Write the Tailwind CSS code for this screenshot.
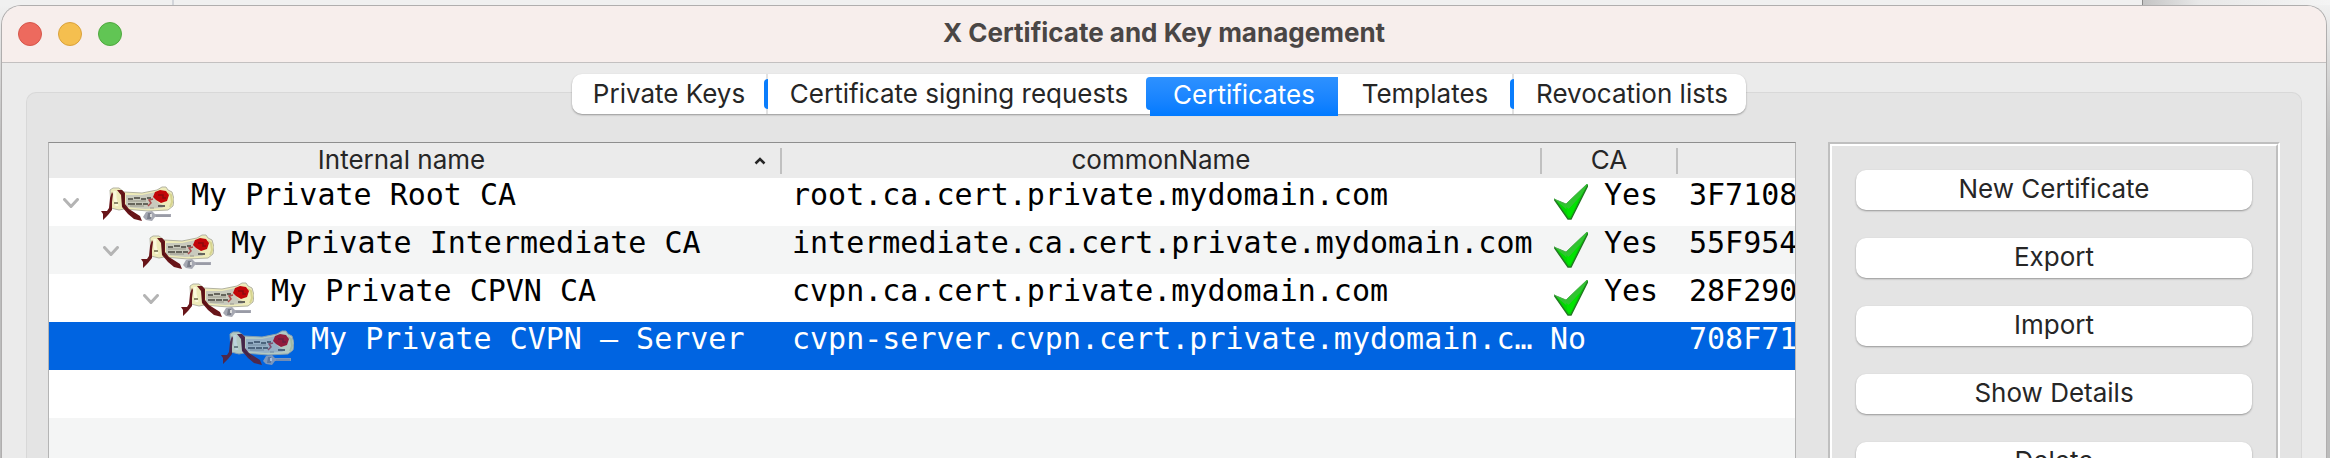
<!DOCTYPE html>
<html lang="en">
<head>
<meta charset="utf-8">
<title>X Certificate and Key management</title>
<script src="https://cdn.jsdelivr.net/npm/@tailwindcss/browser@4"></script>
</head>
<body class="h-screen overflow-hidden bg-[#f0f0f0] font-['Inter',sans-serif] text-[26px] leading-8 text-[#262626]">
<svg class="hidden" aria-hidden="true">
  <symbol id="cert" viewBox="0 0 74 36">
    <path d="M10 4L13 2H19L24 6L42 7L57 4L62 1L66 1L68 4L72 6L74 13L73 20L68 24L48 25L24 23L19 24L11 22Z" fill="#eeebba" stroke="#b3b3a2" stroke-width="1"/>
    <path d="M26 9L42 9L56 6L55 13L60 18L65 20L62 22L45 23L26 21Z" fill="#c9cabd"/>
    <path d="M68 7L71 9L72 16L70 21" fill="none" stroke="#d6d48f" stroke-width="2"/>
    <path d="M15 5V12L17 20" fill="none" stroke="#fbf9dc" stroke-width="3"/>
    <path d="M14 17H18" stroke="#8d8a6a" stroke-width="2"/>
    <path d="M28 13h5m1-1h6m1 1h5m1-1h4M28 18h7m1 0h6m1 0h5M58 20h7" fill="none" stroke="#66655c" stroke-width="2"/>
    <path d="M28 15h18M30 20h14M50 22h4" fill="none" stroke="#98978a" stroke-width="1"/>
    <path d="M48 20L51 17L49 14L53 13" fill="none" stroke="#ad4b4b" stroke-width="1.500"/>
    <path d="M12 6L10 12L9 22L7 25L1 25L3 28L3 34L8 29L12 24L12 16L13 8Z" fill="#681519"/>
    <path d="M17 4L22 4L25 7L25 18L29 23L40 30L42 35L34 33L28 28L22 21L21 9Z" fill="#681519"/>
    <path d="M23 8L23 20L31 27" fill="none" stroke="#4b1014" stroke-width="1"/>
    <path d="M55 6L60 4L66 5L69 9L67 15L61 17L56 14L53 11Z" fill="#c20508"/>
    <path d="M58 9H63V12H66" fill="none" stroke="#8e080c" stroke-width="1.500"/>
    <path d="M46 26L52 25L55 28H71V31H55L52 35L46 34L43 31Z" fill="#a6a8b2"/>
    <path d="M48 27H51V33H47Z" fill="#7b7e8a"/><path d="M50 28H52V31H50Z" fill="#dddddd"/>
    <path d="M56 30H70" stroke="#8c8e99" stroke-width="1"/>
  </symbol>
  <symbol id="check" viewBox="0 0 34 36">
    <path d="M0 15L12 20L33 0L34 1L17 35L14 35Z" fill="#00d600"/>
    <path d="M0 15L12 20L33 0L34 1L26 13L15 25L12 25Z" fill="#2fc52f"/>
    <path d="M12 23L15 25L25 14L17 32L14 32Z" fill="#00e400"/>
    <path d="M0 15L14 35H17L34 1" fill="none" stroke="#237a23" stroke-width="1.500"/>
    <path d="M0 15L12 20L33 0" fill="none" stroke="#4fae4f" stroke-width="1"/>
  </symbol>
  <symbol id="chev" viewBox="0 0 16 10">
    <path d="M1.500 1.500L8 8.500L14.500 1.500" fill="none" stroke="#b4b4b4" stroke-width="3" stroke-linecap="round"/>
  </symbol>
</svg>

<div class="flex h-full flex-col">
  <div class="flex h-[5px] shrink-0">
    <div class="w-[174px] border-r-2 border-[#d2d5da]"></div>
    <div class="flex-1"></div>
    <div class="w-[188px] border-l border-[#8a8a8a] bg-linear-to-r from-[#c4c4c4] via-[#e8e8e8] via-30% to-[#f4f4f4]"></div>
  </div>
  <div class="flex min-h-0 flex-1 bg-linear-to-b from-[#f0f0f0] to-[#bcbcbc] to-30% pr-[3px] pl-px">
    <main class="flex min-w-0 flex-1 flex-col overflow-hidden rounded-t-[20px] border border-b-0 border-[#b0aeae] bg-[#ebebeb]">
      <header class="grid h-[57px] shrink-0 grid-cols-[1fr_auto_1fr] items-center border-b border-[#c3c0c0] bg-[#f7eeec]">
        <div class="flex gap-4 pl-4">
          <button aria-label="Close" class="size-6 rounded-full border border-[#d5564b] bg-[#ed6a5e]"></button>
          <button aria-label="Minimize" class="size-6 rounded-full border border-[#d9a13c] bg-[#f5bf4f]"></button>
          <button aria-label="Zoom" class="size-6 rounded-full border border-[#50a73f] bg-[#61c554]"></button>
        </div>
        <h1 class="pb-[2px] font-bold text-[#4a4645]">X Certificate and Key management</h1>
      </header>

      <div role="tablist" class="z-10 mt-[11px] mr-[10px] flex h-10 shrink-0 self-center rounded-[10px] bg-white shadow-[0_1px_2px_rgba(0,0,0,0.35)]">
        <button role="tab" class="w-[194px]">Private Keys</button>
        <button role="tab" class="relative w-[384px] border-l-2 border-[#e2e2e2]"><span class="absolute top-[5px] -left-1 h-[30px] w-1 rounded-l-sm bg-[#0a7dfc]"></span>Certificate signing requests</button>
        <button role="tab" aria-selected="true" class="relative mt-[3px] h-[39px] w-[188px] bg-linear-to-b from-[#2d91ff] to-[#007aff] pb-1 text-white"><span class="absolute top-0 -left-1 h-[33px] w-1 rounded-l-md bg-linear-to-b from-[#2d91ff] to-[#0a80ff]"></span>Certificates</button>
        <button role="tab" class="w-[174px]">Templates</button>
        <button role="tab" class="relative w-[234px] border-l-2 border-[#e2e2e2] pl-1"><span class="absolute top-[5px] -left-1 h-[30px] w-1 rounded-l-sm bg-[#0a7dfc]"></span>Revocation lists</button>
      </div>

      <section class="mx-6 -mt-[22px] flex min-h-0 flex-1 gap-8 rounded-t-[10px] border border-b-0 border-[#d8d8d8] bg-[#e4e4e4] px-[21px] pt-[49px]">
        <div class="min-w-0 flex-1 overflow-hidden border border-b-0 border-[#b4b4b4] border-t-[#8e8e8e] bg-white">
          <table class="w-full table-fixed border-collapse text-left whitespace-nowrap">
            <colgroup><col class="w-[733px]"><col class="w-[760px]"><col class="w-[136px]"><col></colgroup>
            <thead class="bg-[#ebebeb]">
              <tr class="h-[35px]">
                <th class="p-0 font-normal"><div class="flex h-[26px] items-center border-r-2 border-[#c0c0c0] pr-[14px]"><span class="flex-1 pb-[2px] text-center">Internal name</span>
                  <svg class="h-2 w-3" viewBox="0 0 12 8"><path d="M1.500 6.500L6 2L10.500 6.500" fill="none" stroke="#262626" stroke-width="2.500"/></svg></div></th>
                <th class="p-0 font-normal"><div class="flex h-[26px] items-center justify-center border-r-2 border-[#c0c0c0] pb-[2px]">commonName</div></th>
                <th class="p-0 font-normal"><div class="flex h-[26px] items-center justify-center border-r-2 border-[#c0c0c0] pb-[2px]">CA</div></th>
                <th class="p-0" aria-label="Serial"></th>
              </tr>
            </thead>
            <tbody class="font-['DejaVu_Sans_Mono',monospace] text-[30px] text-black">
              <tr class="h-12">
                <td class="p-0 pl-[14px]"><div class="flex h-12 items-start"><svg class="mt-5 h-[10px] w-4"><use href="#chev"/></svg><svg class="mt-2 ml-[21px] h-9 w-[74px]"><use href="#cert"/></svg><span class="ml-[17px] pt-px">My Private Root CA</span></div></td>
                <td class="p-0 pt-px pl-[10px] align-top">root.ca.cert.private.mydomain.com</td>
                <td class="p-0 pl-3"><div class="flex h-12 items-start"><svg class="mt-[6px] h-9 w-[34px]"><use href="#check"/></svg><span class="ml-4 pt-px">Yes</span></div></td>
                <td class="overflow-hidden p-0 pt-px pl-[11px] align-top">3F7108</td>
              </tr>
              <tr class="h-12 bg-[#f4f5f5]">
                <td class="p-0 pl-[54px]"><div class="flex h-12 items-start"><svg class="mt-5 h-[10px] w-4"><use href="#chev"/></svg><svg class="mt-2 ml-[21px] h-9 w-[74px]"><use href="#cert"/></svg><span class="ml-[17px] pt-px">My Private Intermediate CA</span></div></td>
                <td class="p-0 pt-px pl-[10px] align-top">intermediate.ca.cert.private.mydomain.com</td>
                <td class="p-0 pl-3"><div class="flex h-12 items-start"><svg class="mt-[6px] h-9 w-[34px]"><use href="#check"/></svg><span class="ml-4 pt-px">Yes</span></div></td>
                <td class="overflow-hidden p-0 pt-px pl-[11px] align-top">55F954</td>
              </tr>
              <tr class="h-12">
                <td class="p-0 pl-[94px]"><div class="flex h-12 items-start"><svg class="mt-5 h-[10px] w-4"><use href="#chev"/></svg><svg class="mt-2 ml-[21px] h-9 w-[74px]"><use href="#cert"/></svg><span class="ml-[17px] pt-px">My Private CPVN CA</span></div></td>
                <td class="p-0 pt-px pl-[10px] align-top">cvpn.ca.cert.private.mydomain.com</td>
                <td class="p-0 pl-3"><div class="flex h-12 items-start"><svg class="mt-[6px] h-9 w-[34px]"><use href="#check"/></svg><span class="ml-4 pt-px">Yes</span></div></td>
                <td class="overflow-hidden p-0 pt-px pl-[11px] align-top">28F290</td>
              </tr>
              <tr class="h-12 bg-[#0064e1] text-white">
                <td class="p-0 pl-[171px]"><div class="flex h-12 items-start"><svg class="mt-2 h-9 w-[74px] opacity-75"><use href="#cert"/></svg><span class="ml-[17px] pt-px">My Private CVPN – Server</span></div></td>
                <td class="p-0 pt-px pl-[10px] align-top">cvpn-server.cvpn.cert.private.mydomain.c…</td>
                <td class="p-0 pt-px pl-2 align-top">No</td>
                <td class="overflow-hidden p-0 pt-px pl-[11px] align-top">708F71</td>
              </tr>
              <tr class="h-12"><td colspan="4" class="p-0"></td></tr>
              <tr class="h-12 bg-[#f4f5f5]"><td colspan="4" class="p-0"></td></tr>
            </tbody>
          </table>
        </div>

        <aside class="w-[452px] shrink-0 overflow-hidden border-2 border-b-0 border-[#bfbfbf] border-r-white">
          <div class="flex h-full flex-col gap-7 border-2 border-b-0 border-white border-r-[#bfbfbf] px-6 pt-6">
            <button class="h-10 shrink-0 rounded-[10px] bg-white pb-[2px] shadow-[0_1px_2px_rgba(0,0,0,0.35)]">New Certificate</button>
            <button class="h-10 shrink-0 rounded-[10px] bg-white pb-[2px] shadow-[0_1px_2px_rgba(0,0,0,0.35)]">Export</button>
            <button class="h-10 shrink-0 rounded-[10px] bg-white pb-[2px] shadow-[0_1px_2px_rgba(0,0,0,0.35)]">Import</button>
            <button class="h-10 shrink-0 rounded-[10px] bg-white pb-[2px] shadow-[0_1px_2px_rgba(0,0,0,0.35)]">Show Details</button>
            <button class="h-10 shrink-0 rounded-[10px] bg-white pb-[2px] shadow-[0_1px_2px_rgba(0,0,0,0.35)]">Delete</button>
          </div>
        </aside>
      </section>
    </main>
  </div>
</div>
</body>
</html>
